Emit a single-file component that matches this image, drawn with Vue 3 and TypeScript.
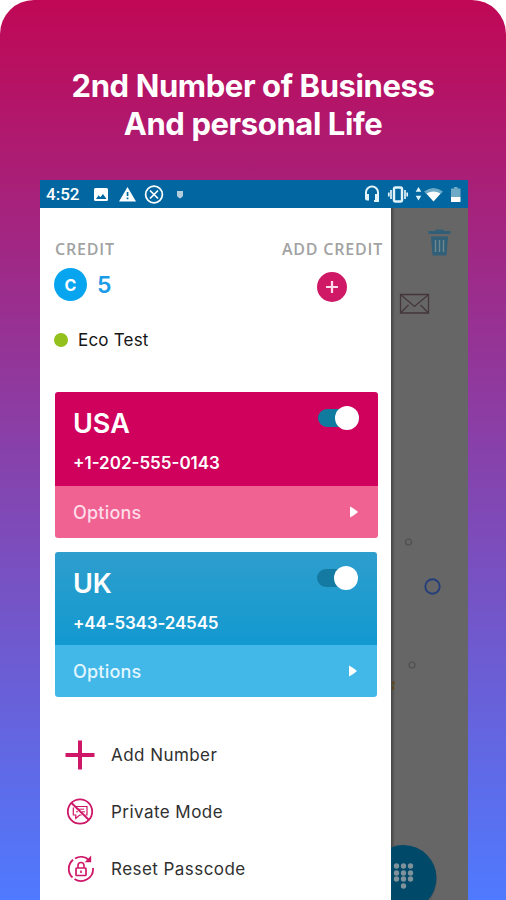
<script setup lang="ts">
interface Line {
  country: string
  phone: string
  theme: string
}

const lines: Line[] = [
  { country: 'USA', phone: '+1-202-555-0143', theme: 'rose' },
  { country: 'UK', phone: '+44-5343-24545', theme: 'azure' },
]

const padDots = [
  [4, 4], [11, 4], [18, 4],
  [4, 11], [11, 11], [18, 11],
  [4, 17], [11, 17], [18, 17],
  [11, 24],
]
</script>

<template>
  <main class="promo">
    <h1 class="headline">2nd Number of Business<br />And personal Life</h1>
    <section class="phone">
      <header class="status">
        <span class="clock">4:52</span>
        <svg class="notices" width="94" height="28" viewBox="0 0 94 28">
          <path fill="#fff" fill-rule="evenodd" d="M2.500 8h11q1.500 0 1.500 1.500v10q0 1.500-1.500 1.500h-11Q1 21 1 19.500v-10Q1 8 2.500 8zM3 19h10.500l-3.500-5-2.600 3.200-1.800-1.900z" />
          <path fill="#fff" fill-rule="evenodd" d="M34.500 7 43 21.500H26zM33.700 12v4h1.700v-4zm0 5.500v1.700h1.700v-1.700z" />
          <g fill="none" stroke="#fff" stroke-width="1.700">
            <circle cx="61" cy="14.500" r="8.400" />
            <path d="m57 10.500 8 8m0-8-8 8" />
          </g>
          <path fill="#b5cddb" d="M84 11h6v4.500q0 1.500-3 3-3-1.500-3-3z" />
        </svg>
        <svg class="signals" width="106" height="28" viewBox="0 0 106 28">
          <path fill="none" stroke="#e2f3fa" stroke-width="2" d="M4 15v-2.500a6 6 0 0 1 12 0V21h-4" />
          <path fill="#e2f3fa" d="M3 14h4v6.500H5q-2 0-2-2zM13 14h4v6h-4z" />
          <rect x="32" y="7.500" width="8" height="14" rx="1.500" fill="none" stroke="#e2f3fa" stroke-width="2.400" />
          <path fill="none" stroke="#e2f3fa" stroke-width="1.700" d="M29 10v9m14-9v9M26.800 12.500v4m18.400-4v4" />
          <path fill="#e2f3fa" d="m56.500 7 2.800 4.800h-5.600zM56.500 20.500l2.800-4.800h-5.600z" />
          <path fill="#6faac7" d="M62 11.500q9.500-7 19 0L71.500 21z" />
          <path fill="#fff" d="M64.500 13.500q7-4 14 0l-7 8z" />
          <path fill="#6faac7" d="M89 8.500h3V7h3.500v1.500h3V17H89z" />
          <rect x="89" y="17" width="9.500" height="5" fill="#fff" />
        </svg>
      </header>

      <div class="screen">
        <aside class="drawer">
          <div class="credits">
            <div>
              <div class="label">CREDIT</div>
              <div class="balance"><span class="coin">C</span><span class="amount">5</span></div>
            </div>
            <div class="topup">
              <div class="label">ADD CREDIT</div>
              <button class="plus" aria-label="ADD CREDIT">
                <svg width="30" height="30" viewBox="0 0 30 30"><path d="M15 9v12M9 15h12" stroke="#ffdcec" stroke-width="2.200" /></svg>
              </button>
            </div>
          </div>
          <div class="profile"><i class="dot"></i><span>Eco Test</span></div>

          <article v-for="line in lines" :key="line.country" class="card" :class="line.theme">
            <div class="card-top">
              <div>
                <h2>{{ line.country }}</h2>
                <p>{{ line.phone }}</p>
              </div>
              <div class="switch"><i></i></div>
            </div>
            <div class="options">
              <span>Options</span>
              <svg width="8" height="12" viewBox="0 0 8 12"><path d="M0 .5v11q4-2 8-5.500Q4 2.500 0 .5z" fill="#fff" /></svg>
            </div>
          </article>

          <nav class="menu">
            <div class="item">
              <svg width="30" height="30" viewBox="0 0 30 30"><path d="M15 .5v29M.5 15h29" stroke="#cf1768" stroke-width="4" /></svg>
              <span>Add Number</span>
            </div>
            <div class="item">
              <svg width="30" height="30" viewBox="0 0 30 30" fill="none" stroke="#cf1768">
                <circle cx="15" cy="14.500" r="12.200" stroke-width="1.800" />
                <path d="M6 5.500 24 23" stroke-width="1.900" />
                <path d="M11 9.500h11v8.500h-1.500M8.300 10.500v7.500h2.500v3.500l3.800-3.500h2" stroke-width="1.200" />
                <path d="M13 12.200h6M11 14.800h2m4 0h3" stroke-width="1" />
              </svg>
              <span>Private Mode</span>
            </div>
            <div class="item">
              <svg width="30" height="30" viewBox="0 0 30 30" fill="none" stroke="#cf1768">
                <path d="M24 6A12 12 0 0 0 10 4.500M8 5.700A12 12 0 0 0 7.500 23.500M9.500 25A12 12 0 0 0 28 14" stroke-width="1.800" />
                <path d="M26.200 1.500v6.800h-6.500z" fill="#cf1768" stroke="none" />
                <rect x="11" y="14" width="10" height="7.500" rx=".8" stroke-width="1.700" />
                <path d="M13 14v-2.500a3 3 0 0 1 6 0V14M16 16.500v2.500" stroke-width="1.600" />
              </svg>
              <span>Reset Passcode</span>
            </div>
          </nav>
        </aside>

        <div class="backdrop">
          <svg width="77" height="692" viewBox="0 0 77 692">
            <g fill="none" stroke="#315f77">
              <path d="M37.500 24.500h22" stroke-width="2.800" />
              <path d="M44.500 23h8" stroke-width="3" />
              <path d="M40 28.500h17L55.500 47.500h-14z" fill="#315f77" stroke="none" />
              <path d="M44.500 32v12m4-12v12m4-12v12" stroke="#6d8791" stroke-width="1.500" />
            </g>
            <g fill="none" stroke="#44373b" stroke-width="1.300">
              <path d="M9.500 86.500h28v18.500h-28z" />
              <path d="m9.500 86.500 14 12 14-12M9.500 105l8-8m20 8-8-8" />
            </g>
            <circle cx="17.500" cy="334" r="3" fill="none" stroke="#4f4f4f" stroke-width="1.200" />
            <circle cx="41.500" cy="378.500" r="7.200" fill="none" stroke="#243e7b" stroke-width="1.900" />
            <circle cx="21" cy="457" r="3" fill="none" stroke="#4f4f4f" stroke-width="1.200" />
            <path d="M1.500 473.500h2v3h-2zm0 4.500H3v4H1.500z" fill="#5c4511" />
            <circle cx="12" cy="671.500" r="34" fill="#555" opacity=".55" />
            <circle cx="12.500" cy="670" r="33" fill="#004969" />
            <g transform="translate(1.500 654)" fill="#7f929c">
              <circle v-for="([x, y], i) in padDots" :key="i" :cx="x" :cy="y" r="2.700" />
            </g>
          </svg>
        </div>
      </div>
    </section>
  </main>
</template>

<style>
body {
  margin: 0;
  background: #fff;
}
</style>

<style scoped>
* {
  box-sizing: border-box;
}
.promo {
  width: 506px;
  height: 900px;
  overflow: hidden;
  border-radius: 34px 34px 0 0;
  background: linear-gradient(#c00855, #4f7aff);
  font-family: Inter, sans-serif;
  display: flex;
  flex-direction: column;
}
.headline {
  margin: 0;
  height: 180px;
  padding-top: 67px;
  text-align: center;
  color: #fff;
  font-size: 31px;
  line-height: 38px;
  font-weight: 700;
  letter-spacing: -0.4px;
}
.phone {
  width: 428px;
  margin-left: 40px;
}
.status {
  height: 28px;
  background: #0267a0;
  display: flex;
  align-items: center;
  padding-left: 6px;
}
.clock {
  width: 47px;
  font: 500 17px/30px Roboto, sans-serif;
  color: #fff;
  white-space: nowrap;
}
.signals {
  margin-left: auto;
}
.screen {
  height: 692px;
  display: flex;
  background: #666;
}
.drawer {
  width: 351px;
  height: 692px;
  background: #fff;
  padding: 0 13px 0 15px;
}
.backdrop {
  width: 77px;
  background: linear-gradient(90deg, #444 0, #666 4px);
}
.backdrop svg {
  display: block;
}
.credits {
  display: flex;
  justify-content: space-between;
  padding-top: 31px;
  height: 110px;
  margin-right: -5px;
}
.label {
  font: 600 16px/20px "Open Sans", sans-serif;
  letter-spacing: 0.8px;
  color: #a2a2a2;
  white-space: nowrap;
}
.balance {
  display: flex;
  align-items: center;
  margin: 9px 0 0 -1px;
}
.coin {
  width: 33px;
  height: 33px;
  border-radius: 50%;
  background: #07a5f0;
  color: #fff;
  font-size: 16px;
  font-weight: 700;
  line-height: 34px;
  text-align: center;
}
.amount {
  margin-left: 10px;
  font-size: 23px;
  font-weight: 600;
  color: #199be8;
}
.topup {
  display: flex;
  flex-direction: column;
  align-items: center;
}
.plus {
  width: 30px;
  height: 30px;
  margin-top: 13px;
  padding: 0;
  border: 0;
  border-radius: 50%;
  background: #d01966;
}
.plus svg {
  display: block;
}
.profile {
  display: flex;
  align-items: center;
  height: 43px;
  margin: 0 0 31px -1px;
  font-size: 17px;
  letter-spacing: 0.2px;
  color: #151515;
}
.dot {
  width: 14px;
  height: 14px;
  margin-right: 10px;
  border-radius: 50%;
  background: #93c01c;
}
.card {
  width: 323px;
  height: 146px;
  margin-bottom: 14px;
  border-radius: 3px;
  overflow: hidden;
  color: #fff;
}
.card-top {
  height: 94px;
  padding: 17px 19px 0 18px;
  display: flex;
  justify-content: space-between;
}
.card h2 {
  margin: 0;
  font-size: 27px;
  line-height: 30px;
  font-weight: 600;
}
.card p {
  margin: 14px 0 0;
  font-size: 17px;
  line-height: 20px;
  font-weight: 600;
}
.options {
  height: 52px;
  padding: 0 20px 0 18px;
  display: flex;
  align-items: center;
  justify-content: space-between;
  font-size: 18px;
  font-weight: 500;
  letter-spacing: 0.2px;
}
.rose .card-top {
  background: #d0005d;
}
.rose .options {
  background: #f06292;
  color: #ffdce9;
}
.azure {
  width: 322px;
  height: 145px;
}
.azure .card-top {
  height: 93px;
  background: linear-gradient(#2e9ecd, #1299d0);
}
.azure p {
  letter-spacing: -0.15px;
}
.azure .options {
  background: #42b8e9;
  color: #e2f6ff;
}
.switch {
  width: 41px;
  height: 18px;
  display: flex;
  align-items: center;
  justify-content: flex-end;
  border-radius: 9px;
  background: #107b9e;
}
.azure .switch {
  background: #147aa2;
}
.switch i {
  flex: none;
  width: 24px;
  height: 24px;
  border-radius: 50%;
  background: #fff;
}
.menu {
  padding: 15px 0 0 10px;
}
.item {
  height: 57px;
  display: flex;
  align-items: center;
  gap: 16px;
  font-size: 17px;
  letter-spacing: 0.45px;
  color: #303030;
  white-space: nowrap;
}
</style>
